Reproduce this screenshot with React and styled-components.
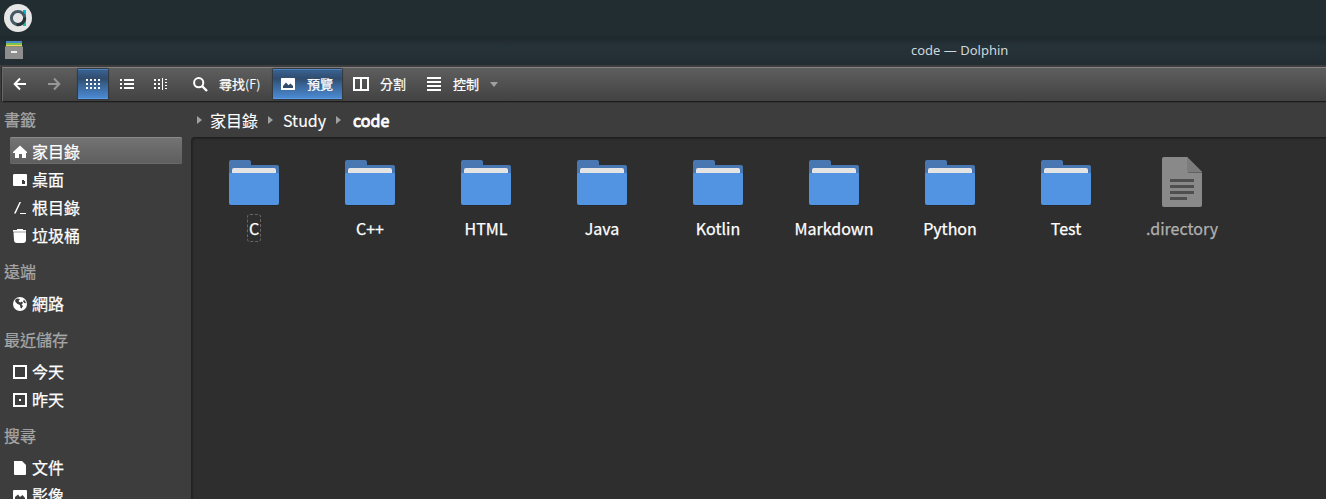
import React from 'react';
import styled, { createGlobalStyle, css } from 'styled-components';

const GlobalStyle = createGlobalStyle`
  * { box-sizing: border-box; }
  body { margin: 0; overflow: hidden; background: #3d3d3d; }
`;

const Window = styled.div`
  display: flex;
  flex-direction: column;
  width: 100%;
  height: 499px;
  overflow: hidden;
  color: #fff;
  background: #3d3d3d;
  font-family: 'Noto Sans CJK TC', 'Noto Sans', sans-serif;
  font-size: 16px;
  font-weight: 400;
  -webkit-text-stroke: 0.25px currentColor;
  white-space: nowrap;
  svg { display: block; flex: none; }
`;

const DesktopPanel = styled.header`
  height: 36px;
  flex: none;
  padding: 3px 3px 0;
  background: #222d32;
`;

const TitleBar = styled.div`
  height: 29px;
  flex: none;
  display: flex;
  align-items: flex-start;
  padding: 4px 0 0 4px;
  background: linear-gradient(#1e282d, #253238 35%, #253137 60%, #222d32);
`;

const Title = styled.div`
  margin-left: 887px;
  padding-top: 1px;
  font: 400 13px/18px 'Noto Sans', sans-serif;
  -webkit-text-stroke: 0;
  color: #cfd8dc;
`;

const ToolBar = styled.div`
  height: 35px;
  flex: none;
  margin: 2px 0 0 2px;
  display: flex;
  align-items: flex-start;
  padding-top: 1px;
  border-top: 1px solid #878383;
  border-bottom: 1px solid #1c1c1c;
  border-left: 1px solid #686868;
  background: linear-gradient(#5e5e5e, #424242);
  box-shadow: -1px 0 #292929, 0 1px #343434;
`;

const ToolButton = styled.div`
  width: ${(p) => p.$w}px;
  height: 30px;
  padding-left: ${(p) => p.$pad || 8}px;
  margin-left: ${(p) => p.$gap || 0}px;
  flex: none;
  display: flex;
  align-items: center;
  font-size: 13px;
  line-height: 20px;
  ${(p) => p.$active && css`
    border-radius: 1px;
    background: linear-gradient(#3a6595, #304c6d 32%, #38618f 50%, #4a88d0 95%);
    box-shadow: inset 0 1px #4c82b9, inset 0 -1px #5a9be5, 0 0 1px 1px #303841;
  `}
`;

const ToolLabel = styled.span`
  margin-left: ${(p) => p.$gap || 11}px;
`;

const Shortcut = styled.span`
  font-size: 12.5px;
  -webkit-text-stroke: 0;
`;

const Body = styled.div`
  flex: 1;
  min-height: 0;
  display: flex;
`;

const Sidebar = styled.aside`
  width: 191px;
  flex: none;
  overflow: hidden;
`;

const SectionTitle = styled.div`
  height: ${(p) => (p.$first ? 35 : 40)}px;
  padding: ${(p) => (p.$first ? 0 : 4)}px 0 0 4px;
  line-height: 35px;
  color: #a6a6a6;
`;

const Place = styled.div`
  height: 28px;
  margin: 0 9px 0 10px;
  padding-left: 2px;
  display: flex;
  align-items: center;
  gap: 4px;
  line-height: 26px;
  ${(p) => p.$selected && css`
    height: 27px;
    margin-bottom: 2px;
    padding-top: 2px;
    border-radius: 2px;
    background: linear-gradient(#747474, #5e5e5e);
    box-shadow: inset 0 1px #8a8a8a, inset 0 -1px #696969;
  `}
`;

const PlaceName = styled.span`
  height: 28px;
`;

const Main = styled.main`
  flex: 1;
  min-width: 0;
  display: flex;
  flex-direction: column;
`;

const Breadcrumb = styled.nav`
  height: 35px;
  flex: none;
  display: flex;
  align-items: center;
  padding-left: 6px;
  line-height: 24px;
`;

const Crumb = styled.span`
  width: ${(p) => p.$w}px;
  margin-left: ${(p) => p.$gap}px;
  -webkit-text-stroke: ${(p) => (p.$current ? 0.8 : 0.1)}px currentColor;
`;

const Files = styled.section`
  flex: 1;
  display: flex;
  align-items: flex-start;
  padding: 18px 0 0 4px;
  border-top: 1px solid #1e1e1e;
  border-left: 1px solid #222;
  border-top-left-radius: 4px;
  background: #2e2e2e;
  box-shadow: inset 1px 1px 1px #252525;
`;

const FileItem = styled.div`
  width: 116px;
  display: flex;
  flex-direction: column;
  align-items: center;
  color: ${(p) => (p.$hidden ? '#b0b0b0' : '#fff')};
`;

const FileName = styled.div`
  margin-top: 4px;
  height: 28px;
  line-height: 27px;
  padding: 0 1px;
  border-radius: 3px;
  border: 1px dashed ${(p) => (p.$focused ? '#666' : 'transparent')};
`;

const DistroLogo = () => (
  <svg width="30" height="30" viewBox="0 0 30 30">
    <circle cx="15" cy="15" r="14" fill="#e6e6e6" />
    <path d="M20 7h3v8h-3z" fill="#00bcd4" />
    <path d="M20 15h3v8h-3z" fill="#1abc9c" />
    <circle cx="15" cy="15" r="6.600" fill="none" stroke="#455a64" strokeWidth="3" />
    <path d="M21.600 14.500a6.600 6.600 0 0 1-8 7" fill="none" stroke="#263238" strokeWidth="3" />
  </svg>
);

const CabinetIcon = () => (
  <svg width="20" height="20" viewBox="0 0 20 20">
    <path d="M2 1h16v3H2z" fill="#4a88c6" />
    <path d="M2 3h16v2H2z" fill="#7cc350" />
    <path d="M2 5h16v1.500H2z" fill="#f1d45e" />
    <path d="M1 6.500h18V19H1z" fill="#8e8e8e" />
    <rect x="7" y="11" width="6" height="2" fill="#eee" />
  </svg>
);

const ArrowIcon = ({ back }) => (
  <svg width="14" height="14" viewBox="0 0 14 14" fill="none" stroke={back ? '#fff' : '#979797'} strokeWidth="2">
    <path d={back ? 'M7 1.500 1.700 7 7 12.500M2 7h11' : 'M7 1.500 12.300 7 7 12.500M12 7H1'} />
  </svg>
);

const DotsIcon = () => (
  <svg width="14" height="12" viewBox="0 0 14 12" fill="#fff">
    {[0, 4, 8].map((y) => [0, 4, 8, 12].map((x) => <rect key={`${x}-${y}`} x={x} y={y + 1} width="2" height="2" />))}
  </svg>
);

const ListIcon = () => (
  <svg width="14" height="12" viewBox="0 0 14 12" fill="#fff">
    <path d="M0 1h2v2H0zM4 1h10v2H4zM0 5h2v2H0zM4 5h10v2H4zM0 9h2v2H0zM4 9h10v2H4z" />
  </svg>
);

const ColumnsIcon = () => (
  <svg width="14" height="12" viewBox="0 0 14 12" fill="#fff">
    <path d="M0 1h2v2H0zM4 1h2v2H4zM0 5h2v2H0zM4 5h2v2H4zM0 9h2v2H0zM4 9h2v2H4zM8 0h1v12H8zM11 1h2v1h-2zM11 4h2v1h-2zM11 7h2v1h-2zM11 10h2v1h-2z" />
  </svg>
);

const SearchIcon = () => (
  <svg width="15" height="15" viewBox="0 0 15 15" fill="none" stroke="#fff">
    <circle cx="5.700" cy="5.700" r="4.600" strokeWidth="2" />
    <path d="m9 9 5 5" strokeWidth="2.400" />
  </svg>
);

const PreviewIcon = () => (
  <svg width="14" height="12" viewBox="0 0 14 12">
    <rect width="14" height="12" rx=".5" fill="#fff" />
    <path d="M2 10V8l3-3.500 2.500 2.700L9.500 5.500 12 8v2z" fill="#304c6d" />
  </svg>
);

const SplitIcon = () => (
  <svg width="16" height="14" viewBox="0 0 16 14" fill="none" stroke="#fff" strokeWidth="2">
    <path d="M1 1h14v12H1zM8 1v12" />
  </svg>
);

const MenuIcon = () => (
  <svg width="14" height="14" viewBox="0 0 14 14" fill="#fff">
    <path d="M0 0h14v2H0zM0 4h14v2H0zM0 8h14v2H0zM0 12h14v2H0z" />
  </svg>
);

const DropArrow = styled.i`
  margin-left: 11px;
  border: 4px solid transparent;
  border-top: 5px solid #a0a0a0;
  border-bottom: 0;
`;

const CrumbArrow = styled.i`
  border: 4px solid transparent;
  border-left: 5px solid #a0a0a0;
  border-right: 0;
`;

const placeShapes = {
  home: <path d="M8 1.500 1 8v1h2v5h4v-4h3v4h4V9h1V8z" />,
  desktop: <path fillRule="evenodd" d="M1 3.500Q1 2 2 2h12q1 0 1 1v10q0 1-1 1H2q-1 0-1-1zM10 8v4h3V9h-1V8z" />,
  root: <path d="M2 13.500 7.500 2H9L3.700 13.500zM8 13h6v1H8z" />,
  trash: <path d="M5 1h6v1h3v1.700H1V2h4zM1.500 4.300h12.500v7.700q0 3-3 3H5q-3 0-3-3z" />,
  network: (
    <>
      <circle cx="8" cy="8" r="7" />
      <path fill="#3d3d3d" d="M3 4 5 2.500 8 3 6.500 5 8 6.500l2-1L11 7 9.500 8.500 11 10l-1.500 2.500-1-.5L8 9 5.500 8 3.500 6zM12 3.500l2 3-1 1-2-2z" />
    </>
  ),
  today: <path d="M1 1h14v14H1zM3 3v10h10V3z" fillRule="evenodd" />,
  yesterday: <path d="M1 1h14v14H1zM3 3v10h10V3zM7 7h2v2H7z" fillRule="evenodd" />,
  document: <path d="M2 1h8l4 4v9q0 1-1 1H3q-1 0-1-1z" />,
  image: <path fillRule="evenodd" d="M2 2h12q1 0 1 1v11H1V3q0-1 1-1zM3 11v1h10v-2l-2.500-3L8 9 6 6.500 3 9z" />,
};

const PlaceIcon = ({ name }) => (
  <svg width="16" height="16" viewBox="0 0 16 16" fill="#fff">{placeShapes[name]}</svg>
);

const FolderIcon = () => (
  <svg width="54" height="54" viewBox="0 0 54 54">
    <path d="M2 6q0-2 2-2h18q2 0 2 2v3h26q2 0 2 2v12H2z" fill="#4877b1" />
    <path d="M5 22v-8q0-2 2-2h40q2 0 2 2v8z" fill="#e4e4e4" />
    <path d="M2 18q0-1 1-1h48q1 0 1 1v29q0 2-2 2H4q-2 0-2-2z" fill="#5294e2" />
    <path d="M4 49.500h46" stroke="#25282c" />
  </svg>
);

const TextFileIcon = () => (
  <svg width="54" height="54" viewBox="0 0 54 54">
    <path d="M7 3q0-2 2-2h23l15 15v33q0 2-2 2H9q-2 0-2-2z" fill="#898989" />
    <path d="M32 1v13q0 2 2 2h13z" fill="#7c7c7c" />
    <path d="M33 16.500h14" stroke="#626262" />
    <path d="M15 23h24v3H15zM15 29h24v3H15zM15 35h24v3H15zM15 41h17v3H15z" fill="#4f4f4f" />
  </svg>
);

const sections = [
  { title: '書籤', places: [['home', '家目錄'], ['desktop', '桌面'], ['root', '根目錄'], ['trash', '垃圾桶']] },
  { title: '遠端', places: [['network', '網路']] },
  { title: '最近儲存', places: [['today', '今天'], ['yesterday', '昨天']] },
  { title: '搜尋', places: [['document', '文件'], ['image', '影像']] },
];

const files = ['C', 'C++', 'HTML', 'Java', 'Kotlin', 'Markdown', 'Python', 'Test', '.directory'];

export default function App() {
  return (
    <Window>
      <GlobalStyle />
      <DesktopPanel><DistroLogo /></DesktopPanel>
      <TitleBar>
        <CabinetIcon />
        <Title>code — Dolphin</Title>
      </TitleBar>
      <ToolBar>
        <ToolButton $w={34} $pad={10}><ArrowIcon back /></ToolButton>
        <ToolButton $w={34} $pad={10}><ArrowIcon /></ToolButton>
        <ToolButton $w={30} $gap={7} $active><DotsIcon /></ToolButton>
        <ToolButton $w={34} $pad={12}><ListIcon /></ToolButton>
        <ToolButton $w={34} $pad={12}><ColumnsIcon /></ToolButton>
        <ToolButton $w={88} $pad={14} $gap={3}>
          <SearchIcon />
          <ToolLabel>尋找<Shortcut>(F)</Shortcut></ToolLabel>
        </ToolButton>
        <ToolButton $w={69} $gap={6} $active>
          <PreviewIcon />
          <ToolLabel $gap={12}>預覽</ToolLabel>
        </ToolButton>
        <ToolButton $w={74} $pad={11}><SplitIcon /><ToolLabel>分割</ToolLabel></ToolButton>
        <ToolButton $w={90} $pad={11}>
          <MenuIcon />
          <ToolLabel $gap={12}>控制</ToolLabel>
          <DropArrow />
        </ToolButton>
      </ToolBar>
      <Body>
        <Sidebar>
          {sections.map((section, i) => (
            <React.Fragment key={section.title}>
              <SectionTitle $first={i === 0}>{section.title}</SectionTitle>
              {section.places.map(([icon, label]) => (
                <Place key={icon} $selected={icon === 'home'}>
                  <PlaceIcon name={icon} />
                  <PlaceName>{label}</PlaceName>
                </Place>
              ))}
            </React.Fragment>
          ))}
        </Sidebar>
        <Main>
          <Breadcrumb>
            <CrumbArrow />
            <Crumb $w={58} $gap={8}>家目錄</Crumb>
            <CrumbArrow />
            <Crumb $w={53} $gap={10}>Study</Crumb>
            <CrumbArrow />
            <Crumb $gap={12} $current>code</Crumb>
          </Breadcrumb>
          <Files>
            {files.map((name, i) => (
              <FileItem key={name} $hidden={name.startsWith('.')}>
                {name.startsWith('.') ? <TextFileIcon /> : <FolderIcon />}
                <FileName $focused={i === 0}>{name}</FileName>
              </FileItem>
            ))}
          </Files>
        </Main>
      </Body>
    </Window>
  );
}
